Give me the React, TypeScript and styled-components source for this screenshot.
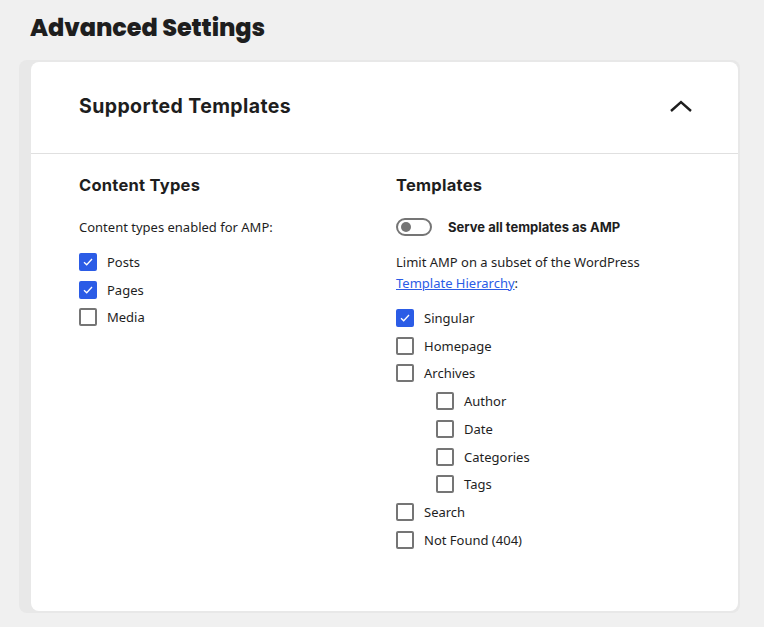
import React from "react";
import styled, { createGlobalStyle } from "styled-components";

const Global = createGlobalStyle`
  html, body { margin: 0; padding: 0; background: #f0f0f0; }
  body { font-family: "Noto Sans", "Open Sans", sans-serif; color: #1e1e1e; }
`;

const Page = styled.div`
  padding: 12px 24px 0 19px;
  width: 764px;
  box-sizing: border-box;
`;

const PageTitle = styled.h1`
  margin: 0 0 16px 11px;
  font-family: "Poppins", "Inter", sans-serif;
  font-weight: 800;
  font-size: 24px;
  line-height: 32px;
  letter-spacing: -0.1px;
  color: #1e1e1e;
`;

const Shadow = styled.div`
  background: #e8e8e8;
  border-radius: 8px;
  padding: 2px 2px 2px 12px;
  width: 721px;
  box-sizing: border-box;
`;

const Card = styled.section`
  background: #fff;
  border-radius: 8px;
`;

const CardHeader = styled.div`
  height: 92px;
  box-sizing: border-box;
  padding: 0 45px 4px 48px;
  display: flex;
  align-items: center;
  justify-content: space-between;
  border-bottom: 1px solid #e0e0e0;
`;

const CardTitle = styled.h2`
  margin: 0;
  font-family: "Inter", sans-serif;
  font-weight: 700;
  font-size: 19.5px;
  letter-spacing: 0.4px;
  color: #1e1e1e;
`;

const Chevron = styled.svg`
  width: 24px;
  height: 12px;
  display: block;
`;

const CardBody = styled.div`
  display: grid;
  grid-template-columns: 293px 293px;
  column-gap: 24px;
  padding: 21px 48px 57px 48px;
`;

const Column = styled.div`
  display: flex;
  flex-direction: column;
`;

const ColTitle = styled.h3`
  margin: 0 0 22px;
  font-family: "Inter", sans-serif;
  font-weight: 700;
  font-size: 16.5px;
  line-height: 20px;
  letter-spacing: 0.25px;
  color: #1e1e1e;
`;

const Text = styled.p`
  margin: 0 0 10px;
  font-size: 13px;
  line-height: 21px;
  color: #1e1e1e;
`;

const Link = styled.a`
  color: #2b5ce6;
  text-decoration: underline;
`;

const List = styled.div`
  display: flex;
  flex-direction: column;
`;

const Row = styled.label<{ $indent?: boolean }>`
  display: flex;
  align-items: center;
  gap: 10px;
  height: 27.75px;
  padding-left: ${(p) => (p.$indent ? "40px" : "0")};
  font-size: 13px;
  color: #1e1e1e;
`;

const Box = styled.span<{ $checked?: boolean }>`
  width: 18px;
  height: 18px;
  box-sizing: border-box;
  border-radius: 2px;
  border: 2px solid ${(p) => (p.$checked ? "#2b5ce6" : "#757575")};
  background: ${(p) => (p.$checked ? "#2b5ce6" : "#fff")};
  display: flex;
  align-items: center;
  justify-content: center;
  flex-shrink: 0;
`;

const ToggleRow = styled.div`
  display: flex;
  align-items: center;
  gap: 16px;
  margin: -2px 0 13px;
  height: 24px;
`;

const Track = styled.span`
  width: 36px;
  height: 18px;
  box-sizing: border-box;
  border: 2px solid #757575;
  border-radius: 9px;
  position: relative;
  flex-shrink: 0;
`;

const Thumb = styled.span`
  position: absolute;
  left: 3px;
  top: 2px;
  width: 10px;
  height: 10px;
  border-radius: 50%;
  background: #757575;
`;

const ToggleLabel = styled.span`
  font-family: "Inter", sans-serif;
  font-weight: 700;
  font-size: 13px;
  color: #1e1e1e;
`;

const Check = () => (
  <svg width="10" height="8" viewBox="0 0 10 8" fill="none">
    <path d="M1 4.2 L3.7 6.8 L9 1" stroke="#fff" strokeWidth="1.3" />
  </svg>
);

const Item = ({ label, checked, indent }: { label: string; checked?: boolean; indent?: boolean }) => (
  <Row $indent={indent}>
    <Box $checked={checked}>{checked && <Check />}</Box>
    {label}
  </Row>
);

export default function App() {
  return (
    <>
      <Global />
      <Page>
        <PageTitle>Advanced Settings</PageTitle>
        <Shadow>
          <Card>
            <CardHeader>
              <CardTitle>Supported Templates</CardTitle>
              <Chevron viewBox="0 0 24 12" fill="none">
                <path d="M2 11 L12 2 L22 11" stroke="#1e1e1e" strokeWidth="2.4" />
              </Chevron>
            </CardHeader>
            <CardBody>
              <Column>
                <ColTitle>Content Types</ColTitle>
                <Text>Content types enabled for AMP:</Text>
                <List>
                  <Item label="Posts" checked />
                  <Item label="Pages" checked />
                  <Item label="Media" />
                </List>
              </Column>
              <Column>
                <ColTitle>Templates</ColTitle>
                <ToggleRow>
                  <Track>
                    <Thumb />
                  </Track>
                  <ToggleLabel>Serve all templates as AMP</ToggleLabel>
                </ToggleRow>
                <Text>
                  Limit AMP on a subset of the WordPress
                  <br />
                  <Link href="#">Template Hierarchy</Link>:
                </Text>
                <List>
                  <Item label="Singular" checked />
                  <Item label="Homepage" />
                  <Item label="Archives" />
                  <Item label="Author" indent />
                  <Item label="Date" indent />
                  <Item label="Categories" indent />
                  <Item label="Tags" indent />
                  <Item label="Search" />
                  <Item label="Not Found (404)" />
                </List>
              </Column>
            </CardBody>
          </Card>
        </Shadow>
      </Page>
    </>
  );
}
